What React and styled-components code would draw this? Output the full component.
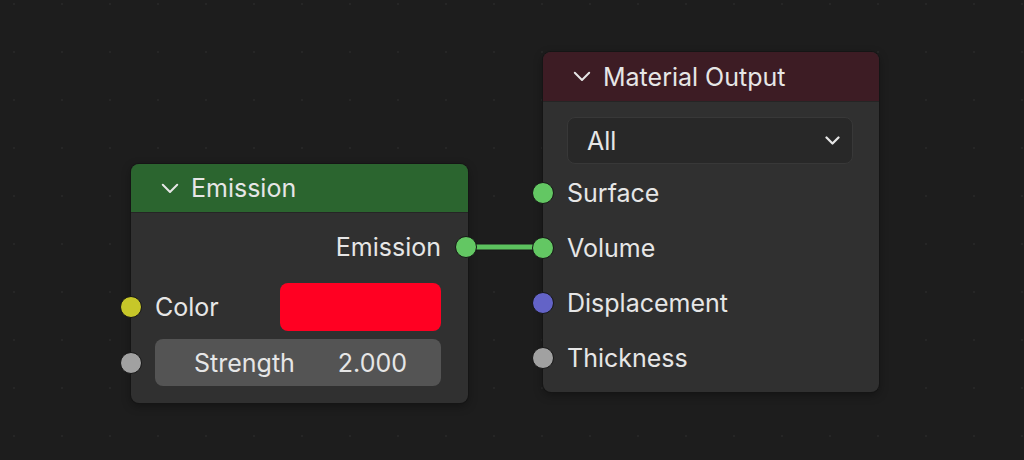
import React from "react";
import styled, { createGlobalStyle } from "styled-components";

const GlobalStyle = createGlobalStyle`
  html, body {
    margin: 0;
    padding: 0;
    background: #1d1d1d;
  }
  body {
    font-family: Inter, "Noto Sans", "DejaVu Sans", sans-serif;
    color: #e6e6e6;
  }
`;

const SOCKET = {
  shader: "#63c763",
  color: "#c7c729",
  float: "#a1a1a1",
  vector: "#6363c7",
};

const Chevron = ({ size = 18, weight = 2.2 }) => (
  <svg width={size} height={size * 0.6} viewBox="0 0 20 12" fill="none">
    <path d="M2 2 L10 10 L18 2" stroke="#e6e6e6" strokeWidth={weight} strokeLinecap="round" strokeLinejoin="round" />
  </svg>
);

const App = () => {
  return (
    <>
      <GlobalStyle />
      <Canvas>
        <Link width="1024" height="460">
          <line x1="466" y1="247" x2="543" y2="247" stroke="#1a1a1a" strokeWidth="8" />
          <line x1="466" y1="247" x2="543" y2="247" stroke="#5cc25e" strokeWidth="5" />
        </Link>

        <Node $x={131} $y={164} $w={337}>
          <NodeHeader $bg="#2b652f" $h={49}>
            <Chevron />
            <HeaderTitle>Emission</HeaderTitle>
          </NodeHeader>
          <EmissionBody>
            <OutputRow>
              <Label>Emission</Label>
              <Socket $color={SOCKET.shader} $side="right" />
            </OutputRow>
            <InputRow $h={48}>
              <Socket $color={SOCKET.color} $side="left" />
              <Label>Color</Label>
              <Swatch />
            </InputRow>
            <InputRow $h={47} $mt={8}>
              <Socket $color={SOCKET.float} $side="left" />
              <Slider>
                <span>Strength</span>
                <span>2.000</span>
              </Slider>
            </InputRow>
          </EmissionBody>
        </Node>

        <Node $x={543} $y={52} $w={336}>
          <NodeHeader $bg="#3d1c24" $h={50}>
            <Chevron />
            <HeaderTitle>Material Output</HeaderTitle>
          </NodeHeader>
          <OutputBody>
            <Dropdown>
              <span>All</span>
              <Chevron size={15} weight={3} />
            </Dropdown>
            {[
              ["Surface", SOCKET.shader],
              ["Volume", SOCKET.shader],
              ["Displacement", SOCKET.vector],
              ["Thickness", SOCKET.float],
            ].map(([name, c]) => (
              <InputRow key={name} $h={55}>
                <Socket $color={c} $side="left" />
                <Label>{name}</Label>
              </InputRow>
            ))}
          </OutputBody>
        </Node>
      </Canvas>
    </>
  );
};

export default App;

const Canvas = styled.div`
  position: relative;
  width: 1024px;
  height: 460px;
  overflow: hidden;
  background-color: #1d1d1d;
  background-image: radial-gradient(circle, #262626 0.9px, transparent 1.4px);
  background-size: 48px 48px;
  background-position: -10px -20px;
`;

const Link = styled.svg`
  position: absolute;
  left: 0;
  top: 0;
  pointer-events: none;
`;

const Node = styled.div`
  position: absolute;
  left: ${(p) => p.$x}px;
  top: ${(p) => p.$y}px;
  width: ${(p) => p.$w}px;
  background: #303030;
  border-radius: 8px;
  box-shadow: 0 0 0 1px #151515, 0 3px 10px rgba(0, 0, 0, 0.35);
`;

const NodeHeader = styled.div`
  display: flex;
  align-items: center;
  gap: 12px;
  height: ${(p) => p.$h}px;
  padding-left: 30px;
  background: ${(p) => p.$bg};
  border-radius: 8px 8px 0 0;
  border-bottom: 1px solid #252525;
  box-sizing: border-box;
`;

const HeaderTitle = styled.span`
  font-size: 25px;
  color: #e6e6e6;
`;

const EmissionBody = styled.div`
  display: flex;
  flex-direction: column;
  padding: 10px 27px 17px 24px;
`;

const OutputBody = styled.div`
  display: flex;
  flex-direction: column;
  padding: 15px 26px 7px 24px;
`;

const Label = styled.span`
  font-size: 25px;
  color: #e6e6e6;
`;

const OutputRow = styled.div`
  position: relative;
  height: 48px;
  display: flex;
  align-items: center;
  justify-content: flex-end;
  margin-bottom: 12px;
`;

const InputRow = styled.div`
  position: relative;
  height: ${(p) => p.$h}px;
  margin-top: ${(p) => p.$mt || 0}px;
  display: flex;
  align-items: center;
  justify-content: space-between;
`;

const Socket = styled.span`
  position: absolute;
  top: 50%;
  ${(p) => (p.$side === "left" ? "left: -35px;" : "right: -36px;")}
  width: 20px;
  height: 20px;
  margin-top: -11px;
  border-radius: 50%;
  background: ${(p) => p.$color};
  border: 1px solid #151515;
`;

const Swatch = styled.div`
  width: 161px;
  height: 48px;
  border-radius: 8px;
  background: #ff0022;
`;

const Slider = styled.div`
  flex: 1;
  height: 47px;
  display: flex;
  align-items: center;
  justify-content: space-between;
  padding: 0 34px 0 39px;
  border-radius: 8px;
  background: #545454;
  font-size: 25px;
  color: #e6e6e6;
`;

const Dropdown = styled.div`
  height: 47px;
  display: flex;
  align-items: center;
  justify-content: space-between;
  padding: 0 12px 0 19px;
  margin-bottom: 1px;
  border-radius: 8px;
  background: #282828;
  border: 1px solid #383838;
  box-sizing: border-box;
  font-size: 25px;
  color: #e6e6e6;
`;
